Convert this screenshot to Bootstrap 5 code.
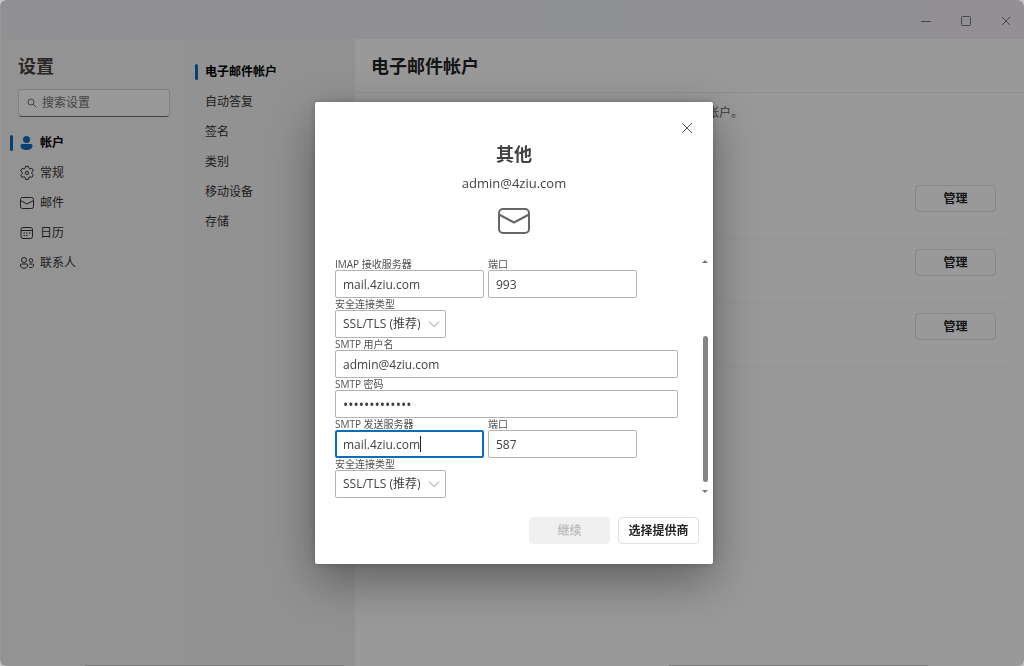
<!DOCTYPE html>
<html lang="zh-CN">
<head>
<meta charset="utf-8">
<meta name="viewport" content="width=device-width, initial-scale=1">
<title>设置</title>
<link href="https://cdn.jsdelivr.net/npm/bootstrap@5.3.0/dist/css/bootstrap.min.css" rel="stylesheet">
<style>
  :root { --accent: #0f6cbd; --ink: #242424; --soft: #616161; }
  body { font-family: "Open Sans", "Noto Sans CJK SC", sans-serif; font-size: 12px; line-height: 18px; color: var(--ink); background: #c4c4c4; }
  button, input, select { font-family: inherit; }
  .app-window { border-radius: 6px; background: #fff; border-left: 1px solid #fff; }
  .title-bar { height: 39px; background: linear-gradient(90deg, #f0f0f6, #eff1f7 60%, #f4f0f9); }
  .win-tools { margin-right: -2px; }
  .win-btn { width: 40px; color: #777; }
  .side-pane { width: 185px; background: #f5f5f5; padding-top: 14px; }
  .sub-pane { width: 169px; background: #f4f4f4; padding-top: 18px; }
  .sub-pane .entry::before { margin-right: 7px; }
  .heading { font-size: 18px; line-height: 26px; font-weight: 700; }
  .side-title { padding-left: 17px; color: #424242; }
  .search-box { height: 28px; margin: 10px 16px 11px 17px; gap: 5px; border: 1px solid #d6d6d6; border-bottom-color: #707070; border-radius: 4px; background: #fff; }
  .search-box input { font-size: 12px; color: #707070; outline: 0; }
  .search-box input::placeholder { color: #707070; }
  .entry { height: 30px; color: #333; text-decoration: none; padding: 0 0 0 9px; }
  .entry::before { content: ""; width: 3px; height: 16px; border-radius: 2px; margin-right: 6px; }
  .entry.active { color: #000; font-weight: 700; }
  .entry.active::before { background: var(--accent); }
  .entry svg { width: 16px; height: 16px; margin-right: 5px; }
  .entry.active svg { color: var(--accent); }
  .page-head { height: 54px; border-bottom: 1px solid #f0f0f0; padding: 14px 16px; }
  .page-text { color: #616161; padding: 11px 16px 42px; }
  .account { height: 64px; border-bottom: 1px solid #f8f8f8; padding: 9px 13px 0 0; }
  .account-list { margin: 0 15px 0 16px; border-top: 1px solid #f8f8f8; padding-top: 11px; }
  .cmd { --bs-btn-font-size: 12px; --bs-btn-font-weight: 700; --bs-btn-padding-x: 0; --bs-btn-padding-y: 0; --bs-btn-line-height: 18px;
         --bs-btn-border-radius: 4px; --bs-btn-bg: #fff; --bs-btn-color: #242424; --bs-btn-border-color: #e0e0e0;
         --bs-btn-disabled-bg: #f0f0f0; --bs-btn-disabled-border-color: #f0f0f0; --bs-btn-disabled-color: #bdbdbd; --bs-btn-disabled-opacity: 1;
         width: 81px; height: 27px; }
  .modal-backdrop { --bs-backdrop-opacity: .4; border-radius: 6px; }
  .modal-dialog { --bs-modal-width: 398px; --bs-modal-margin: 0px; }
  .modal-content { --bs-modal-border-radius: 2px; border: 0; color: #424242; box-shadow: 0 16px 48px rgba(0,0,0,.38), 0 0 6px rgba(0,0,0,.2); padding: 16px 0 20px; }
  .dlg-close { padding-right: 16px; }
  .dlg-title { margin: 3px 0 0; }
  .mail-id { font-size: 13px; line-height: 20px; margin: 6px 0; }
  .dlg-body { padding: 0 5px 0 20px; margin-top: 19px; }
  .dlg-actions { padding: 19px 14px 0 0; }
  .lbl { display: block; font-size: 10px; line-height: 12px; height: 12px; color: #505050; }
  .field { font-size: 12px; line-height: 18px; height: 28px; padding: 0 7px; border: 1px solid #b3b3b3; border-radius: 2px; color: #424242; }
  .field[type=password] { font-size: 14px; }
  .field:focus, .field-current { border: 2px solid var(--accent); padding: 0 6px; box-shadow: none; }
  .w-half { width: 149px; }
  .sec-type { width: 111px; background: #fff url("data:image/svg+xml,%3Csvg xmlns='http://www.w3.org/2000/svg' viewBox='0 0 12 12' fill='none' stroke='%23999'%3E%3Cpath d='M1 3.500 6 8.500l5-5'/%3E%3C/svg%3E") no-repeat right 5px center / 12px 12px; }
  .caret-bar { position: absolute; left: 85px; bottom: 6px; width: 1px; height: 16px; background: #222; }
  .form-rows { margin-right: 24px; }
  .scroll-rail { width: 6px; padding: 2px 0 5px; }
  .scroll-thumb { width: 5px; height: 146px; border-radius: 3px; background: #858585; }
  .edge-strips { height: 1px; z-index: 1052; padding: 0 96px 0 85px; }
  .edge-strips span { width: 259px; background: #777; }
</style>
</head>
<body>
<div class="app-window vh-100 d-flex flex-column overflow-hidden">
  <header class="title-bar d-flex justify-content-end flex-shrink-0">
    <div class="win-tools d-flex">
      <button class="win-btn btn border-0 p-0 d-flex align-items-center justify-content-center" aria-label="最小化"><svg width="12" height="12" stroke="currentColor" fill="none"><path d="M1 7.500h10"/></svg></button>
      <button class="win-btn btn border-0 p-0 d-flex align-items-center justify-content-center" aria-label="最大化"><svg width="12" height="12" stroke="currentColor" fill="none"><rect x="1.500" y="2.500" width="9" height="9" rx="1"/></svg></button>
      <button class="win-btn btn border-0 p-0 d-flex align-items-center justify-content-center" aria-label="关闭窗口"><svg width="12" height="12" stroke="currentColor" fill="none"><path d="m2 3 8 8m0-8-8 8"/></svg></button>
    </div>
  </header>

  <div class="d-flex flex-grow-1">
    <aside class="side-pane flex-shrink-0">
      <h1 class="heading side-title mb-0">设置</h1>
      <div class="search-box d-flex align-items-center ps-2">
        <svg width="10" height="10" viewBox="0 0 10 10" fill="none" stroke="#707070" class="flex-shrink-0"><circle cx="4" cy="4" r="3"/><path d="m6.200 6.200 3 3"/></svg>
        <input type="search" class="border-0 bg-transparent p-0 w-75" placeholder="搜索设置" aria-label="搜索设置">
      </div>
      <nav class="nav flex-column">
        <a href="#" class="entry active d-flex align-items-center"><svg viewBox="0 0 16 16" fill="currentColor"><circle cx="7.500" cy="4.500" r="3.500"/><path d="M3 9h9A1.500 1.500 0 0 1 13.500 10.500c0 3-2.600 4.500-6 4.500s-6-1.500-6-4.500A1.500 1.500 0 0 1 3 9z"/></svg>帐户</a>
        <a href="#" class="entry d-flex align-items-center"><svg viewBox="0 0 16 16" fill="none" stroke="currentColor" stroke-linejoin="round"><path d="M6.600 1.300h2.800l.5 2 1 .6 2-.6 1.400 2.400-1.500 1.500v1.300l1.500 1.500-1.400 2.400-2-.6-1 .6-.5 2H6.600l-.5-2-1-.6-2 .6L1.700 10l1.500-1.500V7.200L1.700 5.700l1.400-2.400 2 .6 1-.6z"/><circle cx="8" cy="7.850" r="1.600"/></svg>常规</a>
        <a href="#" class="entry d-flex align-items-center"><svg viewBox="0 0 16 16" fill="none" stroke="currentColor"><rect x="1.500" y="2.500" width="13" height="11" rx="2"/><path d="m1.500 5.500 6.500 3.500 6.500-3.500"/></svg>邮件</a>
        <a href="#" class="entry d-flex align-items-center"><svg viewBox="0 0 16 16" fill="none" stroke="currentColor"><rect x="2" y="2.500" width="11.500" height="11" rx="2"/><path d="M2 5.500h11.500M7 8h1.500M10 8h1.500M4.500 10.500H6M7 10.500h1.500M4.500 8H6"/></svg>日历</a>
        <a href="#" class="entry d-flex align-items-center"><svg viewBox="0 0 16 16" fill="none" stroke="currentColor"><circle cx="5" cy="5" r="2.500"/><circle cx="12" cy="5.500" r="1.800"/><path d="M2.200 9h5.600c.5 0 .9.400.9.900 0 2-1.500 3.400-3.700 3.400S1.300 11.900 1.300 9.900c0-.5.400-.9.900-.9zM10.200 9h3.600c.5 0 .9.400.9.900 0 2.200-2.200 3.200-4.500 2.500"/></svg>联系人</a>
      </nav>
    </aside>

    <nav class="sub-pane flex-shrink-0">
      <a href="#" class="entry active d-flex align-items-center">电子邮件帐户</a>
      <a href="#" class="entry d-flex align-items-center">自动答复</a>
      <a href="#" class="entry d-flex align-items-center">签名</a>
      <a href="#" class="entry d-flex align-items-center">类别</a>
      <a href="#" class="entry d-flex align-items-center">移动设备</a>
      <a href="#" class="entry d-flex align-items-center">存储</a>
    </nav>

    <main class="flex-grow-1">
      <div class="page-head"><h2 class="heading mb-0">电子邮件帐户</h2></div>
      <p class="page-text mb-0">你可以添加、删除和管理用于此应用中收发电子邮件的电子邮件帐户。</p>
      <div class="account-list">
        <div class="account d-flex justify-content-end"><button class="btn cmd">管理</button></div>
        <div class="account d-flex justify-content-end"><button class="btn cmd">管理</button></div>
        <div class="account d-flex justify-content-end"><button class="btn cmd">管理</button></div>
      </div>
    </main>
  </div>
</div>

<div class="modal-backdrop show"></div>
<div class="edge-strips fixed-bottom d-flex justify-content-between"><span></span><span></span></div>

<div class="modal d-block ps-1" tabindex="-1" role="dialog" aria-modal="true" aria-labelledby="dlgTitle">
  <div class="modal-dialog modal-dialog-centered mx-auto">
    <form class="modal-content">
      <div class="dlg-close d-flex justify-content-end">
        <button type="button" class="btn border-0 p-0 d-flex" aria-label="关闭"><svg width="20" height="20" viewBox="0 0 20 20" stroke="#555" fill="none"><path d="m5 5 10 10m0-10L5 15"/></svg></button>
      </div>
      <div class="d-flex flex-column align-items-center">
        <h2 id="dlgTitle" class="heading dlg-title">其他</h2>
        <div class="mail-id">admin@4ziu.com</div>
        <svg width="36" height="40" viewBox="0 0 36 40" fill="none" stroke="#666" stroke-width="2"><rect x="3" y="10" width="30" height="24" rx="4"/><path d="m3 15.500 15 8 15-8" stroke-linejoin="round"/></svg>
      </div>

      <div class="dlg-body d-flex">
        <div class="form-rows flex-grow-1">
          <div class="d-flex gap-1">
            <div class="w-half"><label class="lbl" for="imapHost">IMAP 接收服务器</label><input id="imapHost" class="form-control field" value="mail.4ziu.com"></div>
            <div class="w-half"><label class="lbl" for="imapPort">端口</label><input id="imapPort" class="form-control field" value="993"></div>
          </div>
          <div><label class="lbl" for="imapSec">安全连接类型</label><select id="imapSec" class="form-select field sec-type"><option>SSL/TLS (推荐)</option></select></div>
          <div><label class="lbl" for="smtpUser">SMTP 用户名</label><input id="smtpUser" class="form-control field" value="admin@4ziu.com"></div>
          <div><label class="lbl" for="smtpPass">SMTP 密码</label><input id="smtpPass" type="password" class="form-control field" value="1234567890123"></div>
          <div class="d-flex gap-1">
            <div class="w-half position-relative"><label class="lbl" for="smtpHost">SMTP 发送服务器</label><input id="smtpHost" class="form-control field field-current" value="mail.4ziu.com"><span class="caret-bar"></span></div>
            <div class="w-half"><label class="lbl" for="smtpPort">端口</label><input id="smtpPort" class="form-control field" value="587"></div>
          </div>
          <div><label class="lbl" for="smtpSec">安全连接类型</label><select id="smtpSec" class="form-select field sec-type"><option>SSL/TLS (推荐)</option></select></div>
        </div>
        <div class="scroll-rail d-flex flex-column align-items-center">
          <svg width="6" height="3" viewBox="0 0 6 3" fill="#777"><path d="M3 0 6 3H0z"/></svg>
          <div class="scroll-thumb mt-auto mb-2"></div>
          <svg width="6" height="3" viewBox="0 0 6 3" fill="#777"><path d="M0 0h6L3 3z"/></svg>
        </div>
      </div>

      <div class="dlg-actions d-flex justify-content-end gap-2">
        <button type="button" class="btn cmd" disabled>继续</button>
        <button type="button" class="btn cmd">选择提供商</button>
      </div>
    </form>
  </div>
</div>
<script src="https://cdn.jsdelivr.net/npm/bootstrap@5.3.0/dist/js/bootstrap.bundle.min.js"></script>
</body>
</html>
